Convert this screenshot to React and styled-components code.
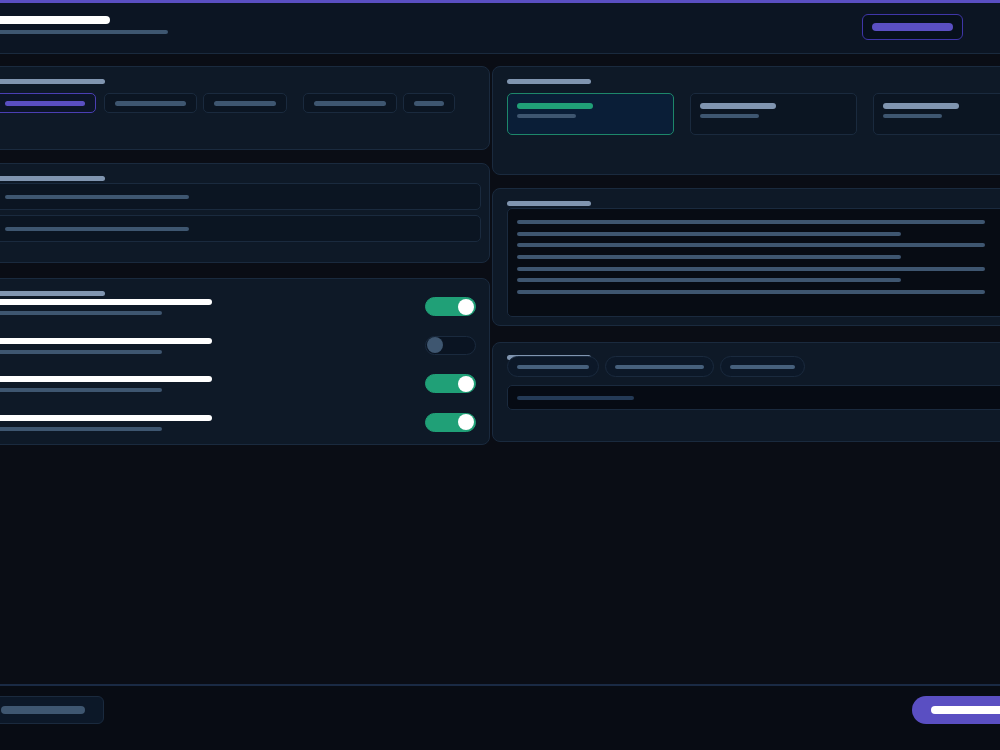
import React from "react";
import styled, { createGlobalStyle } from "styled-components";

const GlobalStyle = createGlobalStyle`
  html, body {
    margin: 0;
    padding: 0;
    background: #0a0d15;
    overflow: hidden;
    font-family: "Inter", "Liberation Sans", sans-serif;
  }
`;

// colours
const PURPLE = "#5a4fc2";
const MUTED = "#3e5670";
const LABEL = "#8095b0";
const GREEN = "#20a077";
const LINE = "#1a2a3e";

const Frame = styled.div`
  width: 1076px;
  height: 750px;
  margin-left: -21px;
  display: flex;
  flex-direction: column;
`;

const TopStrip = styled.div`
  height: 3px;
  flex-shrink: 0;
  background: ${PURPLE};
`;

const Header = styled.header`
  height: 51px;
  flex-shrink: 0;
  box-sizing: border-box;
  background: #0c1523;
  border-bottom: 1px solid ${LINE};
  display: flex;
  justify-content: space-between;
  align-items: flex-start;
  padding: 11px 92px 0 15px;
`;

const HeaderText = styled.div`
  display: flex;
  flex-direction: column;
  gap: 6px;
  margin-top: 2px;
`;

// redacted text line
const Bar = styled.span`
  display: block;
  flex-shrink: 0;
  width: ${(p) => p.$w}px;
  height: ${(p) => p.$h || 4}px;
  border-radius: ${(p) => (p.$h || 4) / 2}px;
  background: ${(p) => p.$c || MUTED};
`;

const OutlineButton = styled.div`
  height: 26px;
  box-sizing: border-box;
  padding: 0 9px;
  border: 1px solid #3f36a8;
  border-radius: 6px;
  background: #07101c;
  display: flex;
  align-items: center;
`;

const Main = styled.main`
  flex: 1;
  display: grid;
  grid-template-columns: 511px 563px;
  column-gap: 2px;
  align-items: start;
  padding-top: 12px;
`;

const Column = styled.div`
  display: flex;
  flex-direction: column;
  gap: 13px;
`;

const Panel = styled.section`
  box-sizing: border-box;
  min-height: ${(p) => p.$h}px;
  margin-top: ${(p) => p.$mt || 0}px;
  background: #0e1927;
  border: 1px solid ${LINE};
  border-radius: 8px;
  padding: 12px ${(p) => (p.$left ? 8 : 14)}px ${(p) => p.$pb ?? 12}px 14px;
`;

const Title = styled(Bar).attrs({ $h: 5, $c: LABEL })`
  margin-bottom: ${(p) => p.$mb || 0}px;
`;

const Tabs = styled.div`
  display: flex;
  gap: 6px;
`;

const Tab = styled.div`
  height: 20px;
  box-sizing: border-box;
  padding: 0 10px;
  border-radius: 5px;
  border: 1px solid ${(p) => (p.$active ? "#4a3fb4" : LINE)};
  background: ${(p) => (p.$active ? "#0c1528" : "#0b1522")};
  display: flex;
  align-items: center;
  margin-left: ${(p) => p.$ml || 0}px;
  margin-right: ${(p) => p.$mr || 0}px;
`;

const ListRow = styled.div`
  height: 27px;
  box-sizing: border-box;
  padding: 0 10px;
  border-radius: 5px;
  border: 1px solid ${LINE};
  background: #0b1522;
  display: flex;
  align-items: center;
  & + & {
    margin-top: 5px;
  }
`;

const ToggleList = styled.div`
  display: flex;
  flex-direction: column;
  gap: 19px;
  margin-top: 1px;
`;

const ToggleRow = styled.div`
  height: 19.5px;
  display: flex;
  justify-content: space-between;
  align-items: flex-start;
  padding-right: 5px;
`;

const RowText = styled.div`
  display: flex;
  flex-direction: column;
  gap: 6px;
  padding-top: 2px;
`;

const Switch = styled.div`
  width: 51px;
  height: 19px;
  box-sizing: border-box;
  border-radius: 10px;
  background: ${(p) => (p.$on ? GREEN : "#0a1422")};
  border: 1px solid ${(p) => (p.$on ? GREEN : LINE)};
  display: flex;
  align-items: center;
  justify-content: ${(p) => (p.$on ? "flex-end" : "flex-start")};
  padding: 0 1px;
  &::after {
    content: "";
    width: 16px;
    height: 16px;
    border-radius: 50%;
    background: ${(p) => (p.$on ? "#ffffff" : "#3e5670")};
  }
`;

const Cards = styled.div`
  display: grid;
  grid-template-columns: repeat(3, 1fr);
  gap: 16px;
`;

const Card = styled.div`
  height: 42px;
  box-sizing: border-box;
  padding: 9px;
  border-radius: 5px;
  border: 1px solid ${(p) => (p.$selected ? "#1d876a" : LINE)};
  background: ${(p) => (p.$selected ? "#0a1e37" : "#0b1522")};
  display: flex;
  flex-direction: column;
  gap: 5px;
`;

const TextArea = styled.div`
  height: 109px;
  box-sizing: border-box;
  padding: 11px 9px;
  border-radius: 5px;
  border: 1px solid ${LINE};
  background: #070c14;
  display: flex;
  flex-direction: column;
  gap: 7.67px;
`;

const Chips = styled.div`
  display: flex;
  gap: 6px;
  margin-top: -4px;
`;

const Chip = styled.div`
  height: 21px;
  box-sizing: border-box;
  padding: 0 9px;
  border-radius: 11px;
  border: 1px solid ${LINE};
  background: #0c1828;
  display: flex;
  align-items: center;
`;

const Input = styled.div`
  height: 25px;
  box-sizing: border-box;
  margin-top: 8px;
  padding: 0 9px;
  border-radius: 5px;
  border: 1px solid ${LINE};
  background: #060b14;
  display: flex;
  align-items: center;
`;

const Footer = styled.footer`
  height: 66px;
  flex-shrink: 0;
  box-sizing: border-box;
  border-top: 2px solid #1a2a44;
  background: #080c14;
  display: flex;
  justify-content: space-between;
  align-items: flex-start;
  padding: 10px 23px 0 12px;
`;

const GhostButton = styled.div`
  height: 28px;
  box-sizing: border-box;
  padding: 0 18px 0 9px;
  border-radius: 6px;
  border: 1px solid ${LINE};
  background: #0c1828;
  display: flex;
  align-items: center;
`;

const PrimaryButton = styled.div`
  width: 120px;
  height: 28px;
  box-sizing: border-box;
  padding: 0 19px;
  border-radius: 14px;
  background: ${PURPLE};
  display: flex;
  align-items: center;
`;

const tabs = [
  { w: 80, active: true, mr: 2 },
  { w: 71 },
  { w: 62 },
  { w: 72, ml: 10 },
  { w: 30 },
];

const toggles = [true, false, true, true];

const cards = [{ selected: true }, {}, {}];

const lines = [468, 384, 468, 384, 468, 384, 468];

const chips = [72, 89, 65];

export default function App() {
  return (
    <>
      <GlobalStyle />
      <Frame>
        <TopStrip />
        <Header>
          <HeaderText>
            <Bar $w={116} $h={8} $c="#ffffff" />
            <Bar $w={174} $h={4} />
          </HeaderText>
          <OutlineButton>
            <Bar $w={81} $h={8} $c={PURPLE} />
          </OutlineButton>
        </Header>

        <Main>
          <Column>
            <Panel $left $h={84}>
              <Title $w={111} $mb={9} />
              <Tabs>
                {tabs.map((t, i) => (
                  <Tab key={i} $active={t.active} $ml={t.ml} $mr={t.mr}>
                    <Bar $w={t.w} $h={5} $c={t.active ? PURPLE : MUTED} />
                  </Tab>
                ))}
              </Tabs>
            </Panel>

            <Panel $left $h={100}>
              <Title $w={111} $mb={2} />
              <ListRow>
                <Bar $w={184} />
              </ListRow>
              <ListRow>
                <Bar $w={184} />
              </ListRow>
            </Panel>

            <Panel $left $h={167} $mt={2}>
              <Title $w={111} />
              <ToggleList>
                {toggles.map((on, i) => (
                  <ToggleRow key={i}>
                    <RowText>
                      <Bar $w={218} $h={6} $c="#ffffff" />
                      <Bar $w={168} $h={4} />
                    </RowText>
                    <Switch $on={on} />
                  </ToggleRow>
                ))}
              </ToggleList>
            </Panel>
          </Column>

          <Column>
            <Panel $h={109}>
              <Title $w={84} $mb={9} />
              <Cards>
                {cards.map((c, i) => (
                  <Card key={i} $selected={c.selected}>
                    <Bar $w={76} $h={6} $c={c.selected ? GREEN : LABEL} />
                    <Bar $w={59} $h={4} />
                  </Card>
                ))}
              </Cards>
            </Panel>

            <Panel $h={138} $pb={8}>
              <Title $w={84} $mb={2} />
              <TextArea>
                {lines.map((w, i) => (
                  <Bar key={i} $w={w} $h={4} />
                ))}
              </TextArea>
            </Panel>

            <Panel $h={100} $mt={3}>
              <Title $w={84} $h={4} />
              <Chips>
                {chips.map((w, i) => (
                  <Chip key={i}>
                    <Bar $w={w} $h={4} $c="#46607c" />
                  </Chip>
                ))}
              </Chips>
              <Input>
                <Bar $w={117} $h={4} $c="#243a56" />
              </Input>
            </Panel>
          </Column>
        </Main>

        <Footer>
          <GhostButton>
            <Bar $w={84} $h={8} />
          </GhostButton>
          <PrimaryButton>
            <Bar $w={82} $h={8} $c="#ffffff" />
          </PrimaryButton>
        </Footer>
      </Frame>
    </>
  );
}
